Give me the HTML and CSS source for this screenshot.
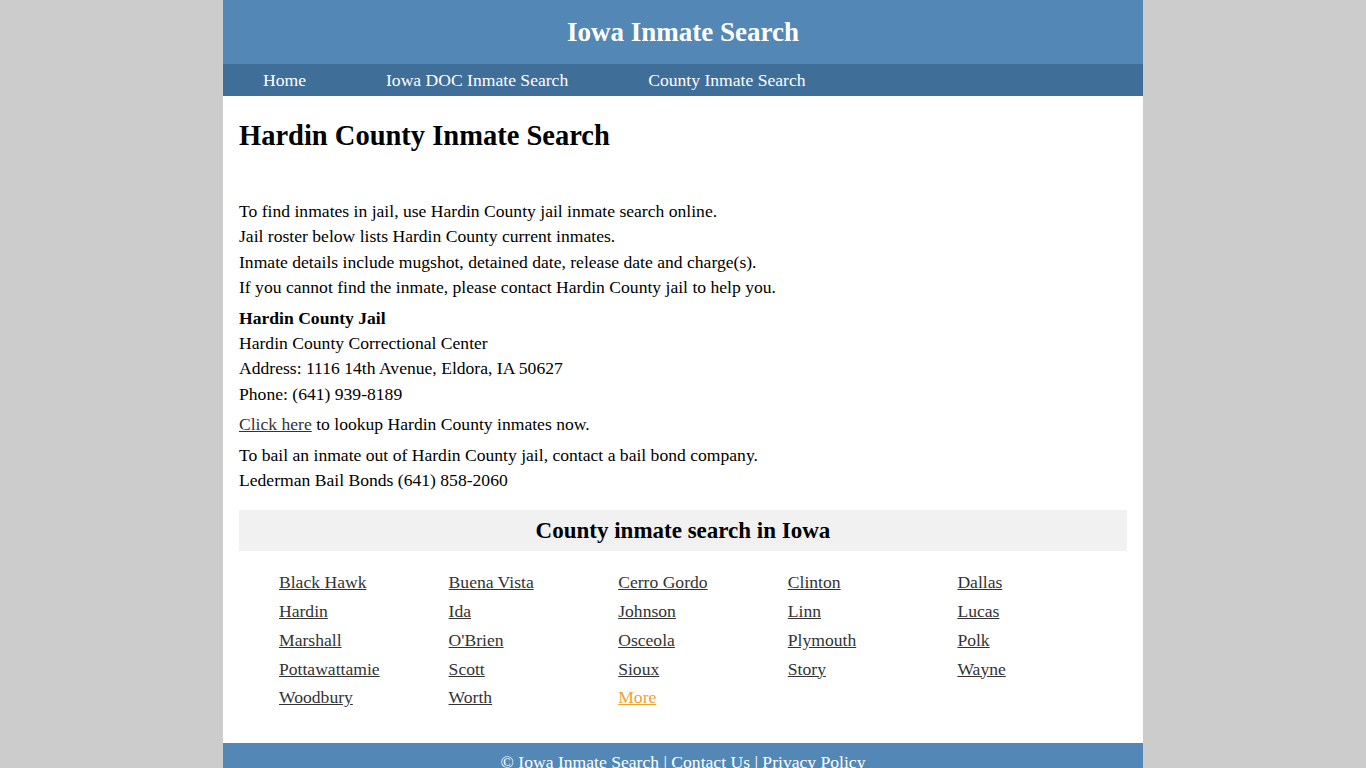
FILE: index.html
```html
<!DOCTYPE html>
<html lang="en">
<head>
    <meta charset="UTF-8">
    <meta name="viewport" content="width=device-width, initial-scale=1.0">
    <title>Hardin County Inmate Search</title>
    <link rel="stylesheet" href="styles.css">
</head>
<body>
    <div class="wrapper">
        <header class="site-header">
            <div class="site-title">Iowa Inmate Search</div>
        </header>
        <nav class="main-nav">
            <a href="#">Home</a>
            <a href="#">Iowa DOC Inmate Search</a>
            <a href="#">County Inmate Search</a>
        </nav>
        <main class="content">
            <h1>Hardin County Inmate Search</h1>
            <p class="intro">
                To find inmates in jail, use Hardin County jail inmate search online.<br>
                Jail roster below lists Hardin County current inmates.<br>
                Inmate details include mugshot, detained date, release date and charge(s).<br>
                If you cannot find the inmate, please contact Hardin County jail to help you.
            </p>
            <p class="jail">
                <strong>Hardin County Jail</strong><br>
                Hardin County Correctional Center<br>
                Address: 1116 14th Avenue, Eldora, IA 50627<br>
                Phone: (641) 939-8189
            </p>
            <p class="lookup"><a href="#">Click here</a> to lookup Hardin County inmates now.</p>
            <p class="bail">
                To bail an inmate out of Hardin County jail, contact a bail bond company.<br>
                Lederman Bail Bonds (641) 858-2060
            </p>

            <h2 class="county-head">County inmate search in Iowa</h2>
            <ul class="county-list">
                <li><a href="#">Black Hawk</a></li>
                <li><a href="#">Buena Vista</a></li>
                <li><a href="#">Cerro Gordo</a></li>
                <li><a href="#">Clinton</a></li>
                <li><a href="#">Dallas</a></li>
                <li><a href="#">Hardin</a></li>
                <li><a href="#">Ida</a></li>
                <li><a href="#">Johnson</a></li>
                <li><a href="#">Linn</a></li>
                <li><a href="#">Lucas</a></li>
                <li><a href="#">Marshall</a></li>
                <li><a href="#">O'Brien</a></li>
                <li><a href="#">Osceola</a></li>
                <li><a href="#">Plymouth</a></li>
                <li><a href="#">Polk</a></li>
                <li><a href="#">Pottawattamie</a></li>
                <li><a href="#">Scott</a></li>
                <li><a href="#">Sioux</a></li>
                <li><a href="#">Story</a></li>
                <li><a href="#">Wayne</a></li>
                <li><a href="#">Woodbury</a></li>
                <li><a href="#">Worth</a></li>
                <li><a href="#" class="more">More</a></li>
            </ul>
        </main>
        <footer class="site-footer">
            &copy; <a href="#">Iowa Inmate Search</a> | <a href="#">Contact Us</a> | <a href="#">Privacy Policy</a>
        </footer>
    </div>
</body>
</html>
```

FILE: styles.css
```css
body {
    background-color: #cccccc;
    color: #000;
    font-family: "Liberation Serif", "DejaVu Serif", serif;
    font-size: 17.6px;
    margin: 0;
    padding: 0;
}
.wrapper {
    width: 920px;
    margin: 0 auto;
    background: #fff;
}
.site-header {
    background: #5387b6;
    height: 64px;
    display: flex;
    align-items: center;
    justify-content: center;
}
.site-title {
    color: #fff;
    font-size: 27px;
    font-weight: bold;
}
.main-nav {
    background: #3f6e98;
    height: 32px;
    display: flex;
    align-items: center;
    padding-left: 40px;
    gap: 80px;
}
.main-nav a {
    color: #fff;
    text-decoration: none;
    font-size: 17.6px;
}
.content {
    padding: 16px 16px 31px;
}
.content h1 {
    font-size: 28.5px;
    font-weight: bold;
    margin: 8px 0 47px;
}
.content p {
    margin: 0 0 5px;
    line-height: 25.4px;
}
.content a {
    color: #333;
}
.county-head {
    background: #f1f1f1;
    text-align: center;
    font-size: 23px;
    font-weight: bold;
    height: 41px;
    line-height: 41px;
    margin: 17px 0 17px;
}
.county-list {
    list-style: none;
    margin: 0;
    padding: 0 0 0 40px;
    display: grid;
    grid-template-columns: repeat(5, 1fr);
}
.county-list li {
    height: 28.7px;
    line-height: 28.7px;
}
.county-list a.more {
    color: #f0a030;
}
.site-footer {
    background: #5387b6;
    color: #fff;
    text-align: center;
    padding: 9px 0 12px;
    line-height: 20px;
}
.site-footer a {
    color: #fff;
}
```
